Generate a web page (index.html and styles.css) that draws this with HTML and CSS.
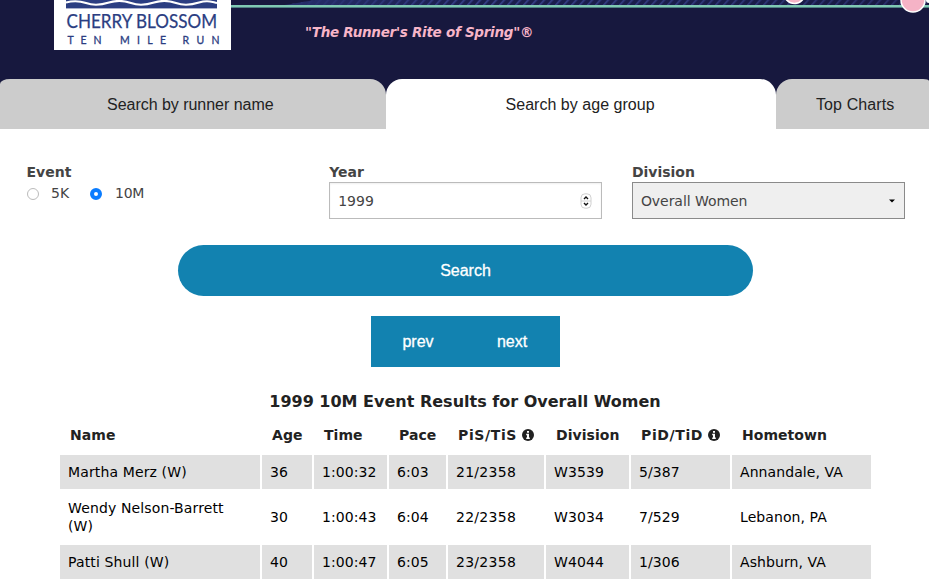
FILE: index.html
```
<!DOCTYPE html>
<html lang="en">
<head>
<meta charset="utf-8">
<title>Cherry Blossom Ten Mile Run Results</title>
<link rel="stylesheet" href="styles.css">
</head>
<body>
<header class="masthead">
  <svg class="ribbon" viewBox="0 0 698 14" width="698" height="14" aria-hidden="true">
    <defs>
      <pattern id="hatch" width="8" height="10" patternUnits="userSpaceOnUse" patternTransform="skewX(-42)">
        <rect width="8" height="10" fill="#181a45"/><rect width="2.500" height="10" fill="#38418a"/>
      </pattern>
      <linearGradient id="fade"><stop offset="0" stop-color="#262e6b"/><stop offset=".3" stop-color="#262e6b" stop-opacity=".2"/><stop offset="1" stop-color="#17183e" stop-opacity=".5"/></linearGradient>
    </defs>
    <path d="M54 5L84 0H698V5Z" fill="url(#hatch)"/>
    <path d="M54 5L84 0H698V5Z" fill="url(#fade)"/>
    <rect y="5" width="698" height="2" fill="#7fc9b3"/>
    <rect y="7" width="698" height="1" fill="#4f7f83"/>
    <circle cx="563.500" cy="-7" r="10.500" fill="#f5b3c6" stroke="#fff" stroke-width="1.500"/>
    <circle cx="682" cy="0" r="12" fill="#f5b3c6" stroke="#fff" stroke-width="1.500"/>
    <circle cx="698" cy="0" r="3" fill="#fff"/>
  </svg>
  <svg class="logo" viewBox="0 0 177 50" width="177" height="50" role="img" aria-label="Cherry Blossom Ten Mile Run">
    <rect width="177" height="50" fill="#fff"/>
    <rect x="12" width="151" height="8.400" fill="#2b3e82"/>
    <path d="M12 2.500C19 .5 25 .5 32 3S47 5 55 2.500S70 .5 77 3S92 5 100 2.500S115 .5 122 3S137 5 145 2.500S156 1.500 163 3" fill="none" stroke="#fff" stroke-width="2"/>
    <text class="logo-name" x="12.500" y="28" textLength="150.500" lengthAdjust="spacingAndGlyphs">CHERRY BLOSSOM</text>
    <g class="logo-sub">
      <text x="13.500" y="44" textLength="34">TEN</text>
      <text x="66" y="44" textLength="46">MILE</text>
      <text x="128.500" y="44" textLength="37">RUN</text>
    </g>
  </svg>
  <p class="tagline">"The Runner's Rite of Spring"®</p>
</header>
<nav class="tabs">
  <a class="tab">Search by runner name</a>
  <a class="tab active">Search by age group</a>
  <a class="tab charts">Top Charts</a>
</nav>
<main>
  <form class="filters">
    <div class="field">
      <span class="label">Event</span>
      <div class="radios"><i class="radio"></i><span class="five">5K</span><i class="radio on"></i><span class="ten">10M</span></div>
    </div>
    <div class="field">
      <span class="label">Year</span>
      <div class="control year"><span>1999</span>
        <svg width="12" height="16" viewBox="0 0 12 16"><rect x="1" y=".8" width="10" height="14.400" rx="4" fill="#fff" stroke="#c4c4c4" stroke-width=".8"/><path d="M1 8h10" stroke="#ccc" stroke-width=".8"/><path d="M4 6l2-2 2 2M4 10l2 2 2-2" fill="none" stroke="#111" stroke-width="1.400"/></svg>
      </div>
    </div>
    <div class="field">
      <span class="label">Division</span>
      <div class="control select"><span>Overall Women</span><svg width="6" height="4" viewBox="0 0 6 4"><path d="M0 0.500h6L3 3.500z"/></svg></div>
    </div>
  </form>
  <div class="search">Search</div>
  <div class="pager"><span>prev</span><span>next</span></div>
  <h1>1999 10M Event Results for Overall Women</h1>
  <table>
    <colgroup><col class="c1"><col class="c2"><col class="c3"><col class="c4"><col class="c5"><col class="c6"><col class="c7"><col class="c8"></colgroup>
    <thead><tr><th>Name</th><th>Age</th><th>Time</th><th>Pace</th>
      <th><span class="abbr">PiS/TiS</span> <svg class="info" viewBox="0 0 12 12"><circle cx="6" cy="6" r="6" fill="#222"/><path d="M5 2h2v1.700H5zM4.200 4.800H7v3.700h.8V10H4.200V8.500H5V6.300h-.8z" fill="#fff"/></svg></th>
      <th>Division</th>
      <th><span class="abbr">PiD/TiD</span> <svg class="info" viewBox="0 0 12 12"><circle cx="6" cy="6" r="6" fill="#222"/><path d="M5 2h2v1.700H5zM4.200 4.800H7v3.700h.8V10H4.200V8.500H5V6.300h-.8z" fill="#fff"/></svg></th>
      <th>Hometown</th></tr></thead>
    <tbody>
      <tr><td class="name">Martha Merz (W)</td><td>36</td><td>1:00:32</td><td>6:03</td><td>21/2358</td><td>W3539</td><td>5/387</td><td>Annandale, VA</td></tr>
      <tr class="tall"><td class="name">Wendy Nelson-Barrett (W)</td><td>30</td><td>1:00:43</td><td>6:04</td><td>22/2358</td><td>W3034</td><td>7/529</td><td>Lebanon, PA</td></tr>
      <tr><td class="name">Patti Shull (W)</td><td>40</td><td>1:00:47</td><td>6:05</td><td>23/2358</td><td>W4044</td><td>1/306</td><td>Ashburn, VA</td></tr>
    </tbody>
  </table>
</main>
</body>
</html>
```

FILE: styles.css
```
* { box-sizing: border-box; }
body { margin: 0; height: 588px; overflow: hidden; background: #fff; color: #222; font-family: "DejaVu Sans", Verdana, sans-serif; font-size: 14px; }
.masthead { position: relative; height: 129px; background: #17183e; display: flex; align-items: flex-start; }
.ribbon { position: absolute; left: 231px; top: 0; }
.logo { position: relative; margin-left: 54px; flex: none; }
.logo-name { font: 18.500px Lato, sans-serif; fill: #2b3e82; stroke: #2b3e82; stroke-width: .25px; }
.logo-sub { font: 10.500px Lato, sans-serif; fill: #2b3e82; stroke: #2b3e82; stroke-width: .3px; }
.tagline { margin: 23px 0 0 74px; font-size: 13.500px; line-height: 18px; font-weight: bold; font-style: italic; color: #f7b5c8; letter-spacing: -.28px; white-space: nowrap; }
.tabs { position: relative; display: flex; margin-top: -50px; width: 929px; }
.tab { flex: none; width: 386px; height: 50px; padding-left: 107px; border-radius: 10px 16px 0 0 / 5px 16px 0 0; background: #ccc; color: #222; font: 16px/51px "Liberation Sans", Arial, sans-serif; letter-spacing: -.03px; }
.tab.active { width: 390px; padding-left: 119.500px; border-radius: 16px 16px 0 0; background: #fff; letter-spacing: .03px; }
.tab.charts { width: 153px; padding-left: 40px; border-radius: 16px 6px 0 0 / 16px 2px 0 0; letter-spacing: .1px; }
.filters { display: flex; gap: 30px; padding: 34px 0 0 26.500px; }
.field { flex: none; width: 272.700px; color: #444; }
.label { display: block; font-weight: bold; line-height: 18px; margin-bottom: 1px; }
.radios { display: flex; align-items: center; height: 22px; }
.radio { width: 12px; height: 12px; margin-top: 2px; border: 1px solid #bbb; border-radius: 50%; }
.five { margin: 0 20.500px 0 12.500px; }
.ten { letter-spacing: -.3px; }
.radio.on { border: 4px solid #0a7cff; margin-right: 13.500px; }
.control { height: 37px; display: flex; align-items: center; justify-content: space-between; border: 1px solid #bbb; padding: 1px 9px 0 8px; }
.control.select { background: #efefef; border-color: #8a8a8a; letter-spacing: -.05px; }
.year { box-shadow: inset 0 1px 2px #0001; }
.search { width: 575px; height: 51px; margin: 26px 0 0 178px; border-radius: 26px; background: #1282b0; color: #fff; font: 16px/51px "Liberation Sans", Arial, sans-serif; text-align: center; -webkit-text-stroke: .3px #fff; }
.pager { display: flex; width: 189px; margin: 20px 0 0 371px; padding-right: 1px; background: #1282b0; color: #fff; font: 16px/51px "Liberation Sans", Arial, sans-serif; text-align: center; -webkit-text-stroke: .3px #fff; }
.pager span { flex: 1; }
h1 { margin: 25px 0 0 1px; font-size: 16px; line-height: 20px; text-align: center; }
table { width: 815px; margin: 3px 0 0 58px; table-layout: fixed; border-spacing: 2px; }
.c1 { width: 200px; } .c2 { width: 50px; } .c3 { width: 73px; } .c4 { width: 57px; } .c5 { width: 96px; } .c6 { width: 83px; } .c7 { width: 99px; } .c8 { width: 139px; }
th { height: 36px; padding: 0 0 1px 10px; text-align: left; white-space: nowrap; font-size: 14px; letter-spacing: .05px; }
.abbr { letter-spacing: .62px; }
td { height: 34px; padding: 0 8px; line-height: 18px; color: #000; letter-spacing: .08px; }
td:nth-child(5) { letter-spacing: .28px; }
td.name { padding-right: 24px; letter-spacing: .13px; }
tr:nth-child(odd) td { background: #e0e0e0; }
.tall td { height: 52px; }
.info { width: 12px; height: 12px; vertical-align: -1px; }
```
